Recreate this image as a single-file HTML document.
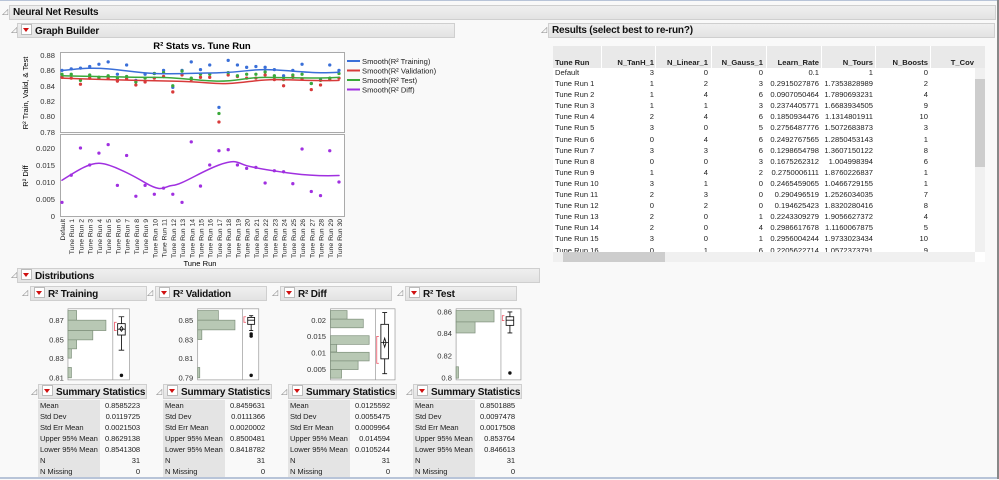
<!DOCTYPE html>
<html><head><meta charset="utf-8"><style>
body{margin:0;width:999px;height:479px;overflow:hidden;background:#f9f9f9;font-family:"Liberation Sans",sans-serif;position:relative;white-space:nowrap}
.a{position:absolute}
.hb{position:absolute;background:linear-gradient(#efefef,#e3e3e3);border:1px solid #cfcfcf;font-weight:bold;font-size:10px;letter-spacing:-0.2px;line-height:13px;color:#111;box-sizing:border-box;height:15px;padding-left:3px;white-space:nowrap;overflow:hidden}
.rt{display:inline-block;width:9px;height:9px;border:1px solid #bbb;background:#fff;vertical-align:-1px;margin-right:3px;position:relative}
.rt:after{content:"";position:absolute;left:1px;top:3px;border-left:3.5px solid transparent;border-right:3.5px solid transparent;border-top:4px solid #d01010}
.ot{position:absolute;font-size:8px;color:#888}
.st{position:absolute;font-size:7.6px;color:#222;letter-spacing:-0.1px}
.st div{height:11px;line-height:11px;position:relative;width:102px}
.st span{position:absolute;right:0}
.st i{font-style:normal;display:inline-block;background:#e4e4e4;width:62px;padding-left:2px;box-sizing:border-box;overflow:hidden}
table{border-collapse:collapse;font-size:7.6px;color:#222;white-space:nowrap;table-layout:fixed}
td{padding:0 1px;overflow:hidden}
</style></head><body>
<div class="a" style="left:0;top:0;width:999px;height:1px;background:#b8c4d8"></div>
<div class="a" style="left:0;top:477px;width:999px;height:2px;background:#b8c4d8"></div>
<div class="a" style="left:997px;top:0;width:2px;height:479px;background:#888"></div>

<div class="ot" style="left:2px;top:7px">◿</div>
<div class="hb" style="left:9px;top:5px;width:987px">Neural Net Results</div>
<div class="ot" style="left:11px;top:25px">◿</div>
<div class="hb" style="left:17px;top:23px;width:438px"><span class="rt"></span>Graph Builder</div>
<div class="ot" style="left:541px;top:25px">◿</div>
<div class="hb" style="left:548px;top:23px;width:447px">Results (select best to re-run?)</div>
<div class="ot" style="left:11px;top:270px">◿</div>
<div class="hb" style="left:17px;top:268px;width:523px"><span class="rt"></span>Distributions</div>

<div class="ot" style="left:22px;top:288px">◿</div>
<div class="hb" style="left:30px;top:286px;width:117px"><span class="rt"></span>R² Training</div>
<div class="ot" style="left:147px;top:288px">◿</div>
<div class="hb" style="left:155px;top:286px;width:112px"><span class="rt"></span>R² Validation</div>
<div class="ot" style="left:272px;top:288px">◿</div>
<div class="hb" style="left:280px;top:286px;width:112px"><span class="rt"></span>R² Diff</div>
<div class="ot" style="left:397px;top:288px">◿</div>
<div class="hb" style="left:405px;top:286px;width:112px"><span class="rt"></span>R² Test</div>

<div class="ot" style="left:31px;top:387px">◿</div>
<div class="hb" style="left:38px;top:384px;width:109px"><span class="rt"></span>Summary Statistics</div>
<div class="ot" style="left:156px;top:387px">◿</div>
<div class="hb" style="left:163px;top:384px;width:109px"><span class="rt"></span>Summary Statistics</div>
<div class="ot" style="left:281px;top:387px">◿</div>
<div class="hb" style="left:288px;top:384px;width:109px"><span class="rt"></span>Summary Statistics</div>
<div class="ot" style="left:406px;top:387px">◿</div>
<div class="hb" style="left:413px;top:384px;width:109px"><span class="rt"></span>Summary Statistics</div>

<div class="st" style="left:38px;top:400px"><div><i>Mean</i><span>0.8585223</span></div><div><i>Std Dev</i><span>0.0119725</span></div><div><i>Std Err Mean</i><span>0.0021503</span></div><div><i>Upper 95% Mean</i><span>0.8629138</span></div><div><i>Lower 95% Mean</i><span>0.8541308</span></div><div><i>N</i><span>31</span></div><div><i>N Missing</i><span>0</span></div></div>
<div class="st" style="left:163px;top:400px"><div><i>Mean</i><span>0.8459631</span></div><div><i>Std Dev</i><span>0.0111366</span></div><div><i>Std Err Mean</i><span>0.0020002</span></div><div><i>Upper 95% Mean</i><span>0.8500481</span></div><div><i>Lower 95% Mean</i><span>0.8418782</span></div><div><i>N</i><span>31</span></div><div><i>N Missing</i><span>0</span></div></div>
<div class="st" style="left:288px;top:400px"><div><i>Mean</i><span>0.0125592</span></div><div><i>Std Dev</i><span>0.0055475</span></div><div><i>Std Err Mean</i><span>0.0009964</span></div><div><i>Upper 95% Mean</i><span>0.014594</span></div><div><i>Lower 95% Mean</i><span>0.0105244</span></div><div><i>N</i><span>31</span></div><div><i>N Missing</i><span>0</span></div></div>
<div class="st" style="left:413px;top:400px"><div><i>Mean</i><span>0.8501885</span></div><div><i>Std Dev</i><span>0.0097478</span></div><div><i>Std Err Mean</i><span>0.0017508</span></div><div><i>Upper 95% Mean</i><span>0.853764</span></div><div><i>Lower 95% Mean</i><span>0.846613</span></div><div><i>N</i><span>31</span></div><div><i>N Missing</i><span>0</span></div></div>

<svg class="a" style="left:0;top:0" width="999" height="479" font-family="Liberation Sans, sans-serif">
<text x="202" y="49" font-size="9.5" font-weight="bold" text-anchor="middle">R² Stats vs. Tune Run</text>
<rect x="60.5" y="52.5" width="284" height="80" fill="#fff" stroke="#aaa"/>
<rect x="60.5" y="134.5" width="284" height="82" fill="#fff" stroke="#aaa"/>
<g font-size="7.6" text-anchor="end" fill="#333">
<text x="55" y="58">0.88</text><text x="55" y="73">0.86</text><text x="55" y="89">0.84</text><text x="55" y="104">0.82</text><text x="55" y="119">0.80</text><text x="55" y="135">0.78</text>
<text x="55" y="151">0.020</text><text x="55" y="168">0.015</text><text x="55" y="185">0.010</text><text x="55" y="202">0.005</text><text x="55" y="219">0</text>
</g>
<text transform="translate(28,93) rotate(-90)" font-size="7.6" text-anchor="middle">R² Train, Valid, &amp; Test</text>
<text transform="translate(28,176) rotate(-90)" font-size="7.6" text-anchor="middle">R² Diff</text>
<g fill="none" stroke-linecap="round">
<g transform="matrix(9.233,0,0,-770,62,732.6)">
<path vector-effect="non-scaling-stroke" stroke="#3a6fd8" stroke-width="3.3" d="M0 .860h0M1 .862h0M2 .863h0M3 .865h0M4 .868h0M5 .871h0M6 .855h0M7 .867h0M8 .847h0M9 .855h0M10 .856h0M11 .860h0M12 .838h0M13 .860h0M14 .871h0M15 .861h0M16 .867h0M17 .812h0M18 .873h0M19 .867h0M20 .864h0M21 .865h0M22 .864h0M23 .861h0M24 .853h0M25 .860h0M26 .868h0M27 .843h0M28 .848h0M29 .867h0M30 .860h0"/>
<path vector-effect="non-scaling-stroke" stroke="#d83a3a" stroke-width="3.3" d="M0 .851h0M1 .850h0M2 .842h0M3 .850h0M4 .850h0M5 .850h0M6 .846h0M7 .849h0M8 .841h0M9 .845h0M10 .850h0M11 .852h0M12 .832h0M13 .854h0M14 .848h0M15 .851h0M16 .851h0M17 .793h0M18 .854h0M19 .852h0M20 .850h0M21 .850h0M22 .854h0M23 .848h0M24 .840h0M25 .851h0M26 .849h0M27 .835h0M28 .841h0M29 .848h0M30 .850h0"/>
<path vector-effect="non-scaling-stroke" stroke="#3aa83a" stroke-width="3.3" d="M0 .855h0M1 .855h0M2 .847h0M3 .854h0M4 .851h0M5 .853h0M6 .850h0M7 .852h0M8 .845h0M9 .850h0M10 .856h0M11 .857h0M12 .840h0M13 .859h0M14 .850h0M15 .855h0M16 .855h0M17 .804h0M18 .857h0M19 .853h0M20 .855h0M21 .855h0M22 .858h0M23 .853h0M24 .848h0M25 .854h0M26 .855h0M27 .843h0M28 .847h0M29 .850h0M30 .856h0"/>
<path vector-effect="non-scaling-stroke" stroke="#3a6fd8" stroke-width="1.5" d="M0 .860C2 .862 3 .864 5 .862S8 .857 10 .856S14 .856 17 .857S20 .861 22 .861S26 .857 28 .857S30 .858 30 .858"/>
<path vector-effect="non-scaling-stroke" stroke="#d83a3a" stroke-width="1.5" d="M0 .850C4 .848 8 .847 12 .846S16 .842 18 .843S21 .848 23 .848S28 .846 30 .847"/>
<path vector-effect="non-scaling-stroke" stroke="#3aa83a" stroke-width="1.5" d="M0 .853C4 .852 7 .851 10 .851S15 .846 17 .846S20 .851 22 .851S27 .849 30 .851"/>
</g>
<g transform="matrix(9.233,0,0,-3400,62,216)">
<path vector-effect="non-scaling-stroke" stroke="#a030e0" stroke-width="3.3" d="M0 .004h0M1 .012h0M2 .020h0M3 .015h0M4 .0185h0M5 .021h0M6 .009h0M7 .0178h0M8 .0058h0M9 .009h0M10 .0064h0M11 .0082h0M12 .0064h0M13 .004h0M14 .0218h0M15 .0088h0M16 .015h0M17 .0192h0M18 .0195h0M19 .015h0M20 .014h0M21 .0143h0M22 .0097h0M23 .0133h0M24 .013h0M25 .0095h0M26 .0197h0M27 .0072h0M28 .006h0M29 .0192h0M30 .010h0"/>
<path vector-effect="non-scaling-stroke" stroke="#a030e0" stroke-width="1.5" d="M0 .0105C2 .014 3 .0155 4 .0155S7 .013 9 .0098S11 .0088 12 .009S15 .013 17 .015S19 .0155 20 .0148S23 .0132 25 .0125S29 .0118 30 .0119"/>
</g>
</g>
<g stroke-width="2"><line x1="347" y1="61" x2="360" y2="61" stroke="#3a6fd8"/><line x1="347" y1="70.5" x2="360" y2="70.5" stroke="#d83a3a"/><line x1="347" y1="80" x2="360" y2="80" stroke="#3aa83a"/><line x1="347" y1="89.5" x2="360" y2="89.5" stroke="#a030e0"/></g>
<g font-size="7.6" fill="#222"><text x="362" y="64">Smooth(R² Training)</text><text x="362" y="73.5">Smooth(R² Validation)</text><text x="362" y="83">Smooth(R² Test)</text><text x="362" y="92.5">Smooth(R² Diff)</text></g>
<g font-size="6.8" fill="#222" text-anchor="end">
<text transform="translate(65,219) rotate(-90)">Default</text>
<text transform="translate(74.2,219) rotate(-90)">Tune Run 1</text><text transform="translate(83.5,219) rotate(-90)">Tune Run 2</text><text transform="translate(92.7,219) rotate(-90)">Tune Run 3</text><text transform="translate(101.9,219) rotate(-90)">Tune Run 4</text><text transform="translate(111.2,219) rotate(-90)">Tune Run 5</text><text transform="translate(120.4,219) rotate(-90)">Tune Run 6</text><text transform="translate(129.6,219) rotate(-90)">Tune Run 7</text><text transform="translate(138.9,219) rotate(-90)">Tune Run 8</text><text transform="translate(148.1,219) rotate(-90)">Tune Run 9</text><text transform="translate(157.3,219) rotate(-90)">Tune Run 10</text><text transform="translate(166.6,219) rotate(-90)">Tune Run 11</text><text transform="translate(175.8,219) rotate(-90)">Tune Run 12</text><text transform="translate(185,219) rotate(-90)">Tune Run 13</text><text transform="translate(194.3,219) rotate(-90)">Tune Run 14</text><text transform="translate(203.5,219) rotate(-90)">Tune Run 15</text><text transform="translate(212.7,219) rotate(-90)">Tune Run 16</text><text transform="translate(222,219) rotate(-90)">Tune Run 17</text><text transform="translate(231.2,219) rotate(-90)">Tune Run 18</text><text transform="translate(240.4,219) rotate(-90)">Tune Run 19</text><text transform="translate(249.7,219) rotate(-90)">Tune Run 20</text><text transform="translate(258.9,219) rotate(-90)">Tune Run 21</text><text transform="translate(268.1,219) rotate(-90)">Tune Run 22</text><text transform="translate(277.4,219) rotate(-90)">Tune Run 23</text><text transform="translate(286.6,219) rotate(-90)">Tune Run 24</text><text transform="translate(295.8,219) rotate(-90)">Tune Run 25</text><text transform="translate(305.1,219) rotate(-90)">Tune Run 26</text><text transform="translate(314.3,219) rotate(-90)">Tune Run 27</text><text transform="translate(323.5,219) rotate(-90)">Tune Run 28</text><text transform="translate(332.8,219) rotate(-90)">Tune Run 29</text><text transform="translate(342,219) rotate(-90)">Tune Run 30</text>
</g>
<text x="200" y="266" font-size="7.6" text-anchor="middle">Tune Run</text>

<g transform="translate(0,265) scale(0.345)">
<g fill="#b8c8b4" stroke="#7d8f7a" stroke-width="2">
<rect x="197" y="127" width="178" height="206" fill="#fff" stroke="#999"/>
<line x1="327" y1="127" x2="327" y2="333" stroke="#999"/>
<rect x="197" y="132" width="25" height="28"/><rect x="197" y="160" width="110" height="30"/><rect x="197" y="190" width="72" height="27"/><rect x="197" y="217" width="25" height="26"/><rect x="197" y="243" width="10" height="27"/><rect x="197" y="297" width="10" height="30"/>
<rect x="573" y="127" width="177" height="206" fill="#fff" stroke="#999"/>
<line x1="703" y1="127" x2="703" y2="333" stroke="#999"/>
<rect x="573" y="132" width="60" height="28"/><rect x="573" y="160" width="108" height="28"/><rect x="573" y="188" width="12" height="28"/><rect x="573" y="297" width="6" height="30"/>
<rect x="958" y="127" width="187" height="206" fill="#fff" stroke="#999"/>
<line x1="1088" y1="127" x2="1088" y2="333" stroke="#999"/>
<rect x="958" y="132" width="48" height="25"/><rect x="958" y="157" width="95" height="25"/><rect x="958" y="205" width="112" height="25"/><rect x="958" y="230" width="18" height="22"/><rect x="958" y="253" width="112" height="25"/><rect x="958" y="278" width="80" height="25"/><rect x="958" y="303" width="32" height="25"/>
<rect x="1322" y="127" width="188" height="206" fill="#fff" stroke="#999"/>
<line x1="1452" y1="127" x2="1452" y2="333" stroke="#999"/>
<rect x="1322" y="132" width="110" height="33"/><rect x="1322" y="165" width="55" height="32"/><rect x="1322" y="295" width="7" height="33"/>
</g>
<g fill="none" stroke="#111" stroke-width="2.5">
<path d="M352 150V170M352 203V247M344 150h16M344 247h16"/><rect x="341" y="170" width="22" height="33" fill="#fff"/><path d="M341 186h22M352 178l5 7-5 7-5-7z"/>
<path d="M728 147V152M728 172V190M722 147h12M722 190h12"/><rect x="718" y="152" width="20" height="20" fill="#fff"/><path d="M718 160h20"/>
<path d="M1115 138V172M1115 272V315M1108 138h14M1108 315h14"/><rect x="1104" y="172" width="22" height="100" fill="#fff"/><path d="M1104 225h22M1115 212l4 13-4 13-4-13z"/>
<path d="M1478 136V150M1478 175V197M1471 136h14M1471 197h14"/><rect x="1467" y="150" width="22" height="25" fill="#fff"/><path d="M1467 160h22"/>
</g>
<g fill="none" stroke="#f06070" stroke-width="2.5"><path d="M338 166h-6v24h6"/><path d="M713 150h-6v16h6"/><path d="M1098 207h-6v78h6"/><path d="M1462 147h-6v14h6"/></g>
<g fill="#111"><circle cx="352" cy="320" r="5"/><circle cx="728" cy="200" r="5"/><circle cx="728" cy="206" r="5"/><circle cx="728" cy="320" r="5"/><circle cx="1478" cy="313" r="5"/></g>
<g font-size="22" text-anchor="end" fill="#333">
<text x="185" y="168">0.87</text><text x="185" y="224">0.85</text><text x="185" y="278">0.83</text><text x="185" y="335">0.81</text>
<text x="560" y="168">0.85</text><text x="560" y="224">0.83</text><text x="560" y="278">0.81</text><text x="560" y="335">0.79</text>
<text x="945" y="168">0.02</text><text x="945" y="215">0.015</text><text x="945" y="262">0.01</text><text x="945" y="310">0.005</text>
<text x="1310" y="144">0.86</text><text x="1310" y="206">0.84</text><text x="1310" y="271">0.82</text><text x="1310" y="335">0.8</text>
</g>
</g>
</svg>

<div class="a" style="left:553px;top:46px;width:432px;height:216px;background:#fff"></div>
<div class="a" style="left:553px;top:46px;width:432px;height:22px;background:#e9e9e9"></div>
<div class="a" style="left:601px;top:46px;width:1px;height:22px;background:#fff"></div>
<div class="a" style="left:655px;top:46px;width:1px;height:22px;background:#fff"></div>
<div class="a" style="left:711px;top:46px;width:1px;height:22px;background:#fff"></div>
<div class="a" style="left:766px;top:46px;width:1px;height:22px;background:#fff"></div>
<div class="a" style="left:821px;top:46px;width:1px;height:22px;background:#fff"></div>
<div class="a" style="left:875px;top:46px;width:1px;height:22px;background:#fff"></div>
<div class="a" style="left:930px;top:46px;width:1px;height:22px;background:#fff"></div>
<div class="a" style="left:975px;top:68px;width:10px;height:184px;background:#f0f0f0"></div>
<div class="a" style="left:975px;top:79px;width:10px;height:88px;background:#cdcdcd"></div>
<div class="a" style="left:553px;top:252px;width:422px;height:10px;background:#f0f0f0"></div>
<div class="a" style="left:563px;top:252px;width:102px;height:10px;background:#cdcdcd"></div>
<div class="a" style="left:553px;top:56px;width:422px;height:196px;overflow:hidden">
<table style="position:absolute;left:0;top:0;width:422px">
<colgroup><col style="width:48px"><col style="width:54px"><col style="width:54px"><col style="width:55px"><col style="width:56px"><col style="width:54px"><col style="width:55px"><col style="width:46px"></colgroup>
<tr style="height:12px;font-weight:bold"><td style="padding-left:2px">Tune Run</td><td align="right">N_TanH_1</td><td align="right">N_Linear_1</td><td align="right">N_Gauss_1</td><td align="right">Learn_Rate</td><td align="right">N_Tours</td><td align="right">N_Boosts</td><td align="right">T_Cov</td></tr>
</table>
<table style="position:absolute;left:0;top:11px;line-height:11.1px;width:376px">
<colgroup><col style="width:48px"><col style="width:54px"><col style="width:54px"><col style="width:55px"><col style="width:56px"><col style="width:54px"><col style="width:55px"></colgroup>
<tr><td style="padding-left:2px">Default</td><td align="right">3</td><td align="right">0</td><td align="right">0</td><td align="right">0.1</td><td align="right">1</td><td align="right">0</td></tr>
<tr><td style="padding-left:2px">Tune Run 1</td><td align="right">1</td><td align="right">2</td><td align="right">3</td><td align="right">0.2915027876</td><td align="right">1.7353828989</td><td align="right">2</td></tr>
<tr><td style="padding-left:2px">Tune Run 2</td><td align="right">1</td><td align="right">4</td><td align="right">6</td><td align="right">0.0907050464</td><td align="right">1.7890693231</td><td align="right">4</td></tr>
<tr><td style="padding-left:2px">Tune Run 3</td><td align="right">1</td><td align="right">1</td><td align="right">3</td><td align="right">0.2374405771</td><td align="right">1.6683934505</td><td align="right">9</td></tr>
<tr><td style="padding-left:2px">Tune Run 4</td><td align="right">2</td><td align="right">4</td><td align="right">6</td><td align="right">0.1850934476</td><td align="right">1.1314801911</td><td align="right">10</td></tr>
<tr><td style="padding-left:2px">Tune Run 5</td><td align="right">3</td><td align="right">0</td><td align="right">5</td><td align="right">0.2756487776</td><td align="right">1.5072683873</td><td align="right">3</td></tr>
<tr><td style="padding-left:2px">Tune Run 6</td><td align="right">0</td><td align="right">4</td><td align="right">6</td><td align="right">0.2492767565</td><td align="right">1.2850453143</td><td align="right">1</td></tr>
<tr><td style="padding-left:2px">Tune Run 7</td><td align="right">3</td><td align="right">3</td><td align="right">6</td><td align="right">0.1298654798</td><td align="right">1.3607150122</td><td align="right">8</td></tr>
<tr><td style="padding-left:2px">Tune Run 8</td><td align="right">0</td><td align="right">0</td><td align="right">3</td><td align="right">0.1675262312</td><td align="right">1.004998394</td><td align="right">6</td></tr>
<tr><td style="padding-left:2px">Tune Run 9</td><td align="right">1</td><td align="right">4</td><td align="right">2</td><td align="right">0.2750006111</td><td align="right">1.8760226837</td><td align="right">1</td></tr>
<tr><td style="padding-left:2px">Tune Run 10</td><td align="right">3</td><td align="right">1</td><td align="right">0</td><td align="right">0.2465459065</td><td align="right">1.0466729155</td><td align="right">1</td></tr>
<tr><td style="padding-left:2px">Tune Run 11</td><td align="right">2</td><td align="right">3</td><td align="right">0</td><td align="right">0.290496519</td><td align="right">1.2526034035</td><td align="right">7</td></tr>
<tr><td style="padding-left:2px">Tune Run 12</td><td align="right">0</td><td align="right">2</td><td align="right">0</td><td align="right">0.194625423</td><td align="right">1.8320280416</td><td align="right">8</td></tr>
<tr><td style="padding-left:2px">Tune Run 13</td><td align="right">2</td><td align="right">0</td><td align="right">1</td><td align="right">0.2243309279</td><td align="right">1.9056627372</td><td align="right">4</td></tr>
<tr><td style="padding-left:2px">Tune Run 14</td><td align="right">2</td><td align="right">0</td><td align="right">4</td><td align="right">0.2986617678</td><td align="right">1.1160067875</td><td align="right">5</td></tr>
<tr><td style="padding-left:2px">Tune Run 15</td><td align="right">3</td><td align="right">0</td><td align="right">1</td><td align="right">0.2956004244</td><td align="right">1.9733023434</td><td align="right">10</td></tr>
<tr><td style="padding-left:2px">Tune Run 16</td><td align="right">0</td><td align="right">1</td><td align="right">6</td><td align="right">0.2205622714</td><td align="right">1.0572373791</td><td align="right">9</td></tr>
</table>
</div>
</body></html>
